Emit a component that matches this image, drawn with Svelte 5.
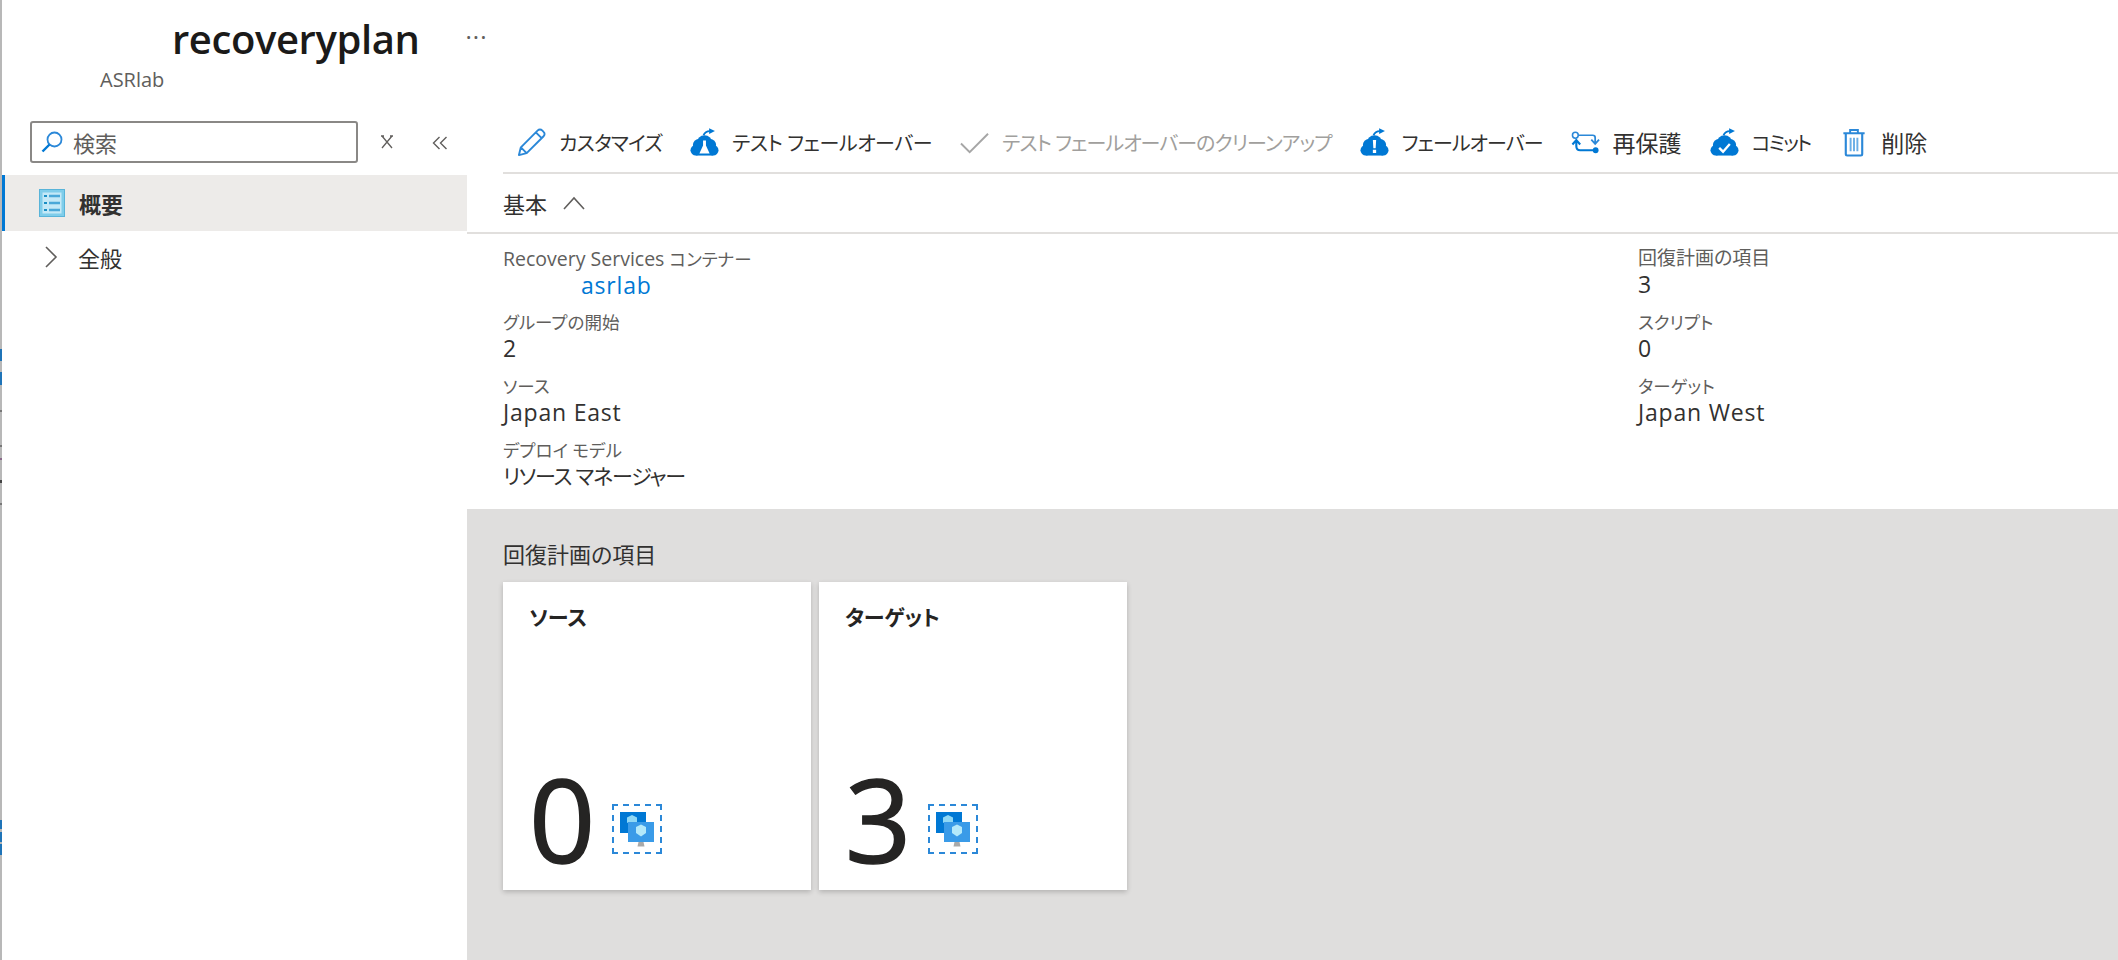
<script lang="ts">
  // Recovery plan overview blade
  type Tool = { icon: string; label: string; off?: boolean; kind?: string };
  const tools: Tool[] = [
    { icon: "pencil", label: "カスタマイズ" },
    { icon: "flask", label: "テスト フェールオーバー", kind: "loose" },
    { icon: "check", label: "テスト フェールオーバーのクリーンアップ", off: true, kind: "narrow" },
    { icon: "alert", label: "フェールオーバー", kind: "narrow" },
    { icon: "swap", label: "再保護", kind: "kanji" },
    { icon: "commit", label: "コミット", kind: "tight" },
    { icon: "trash", label: "削除", kind: "kanji last" },
  ];
  type Field = { latin?: string; label: string; value: string; kind?: string; wide?: boolean };
  const leftFields: Field[] = [
    { latin: "Recovery Services ", label: "コンテナー", value: "asrlab", kind: "link" },
    { label: "グループの開始", value: "2" },
    { label: "ソース", value: "Japan East" },
    { label: "デプロイ モデル", value: "リソース マネージャー", kind: "kana" },
  ];
  const rightFields: Field[] = [
    { label: "回復計画の項目", value: "3", wide: true },
    { label: "スクリプト", value: "0" },
    { label: "ターゲット", value: "Japan West" },
  ];
  const cards = [
    { title: "ソース", count: 0 },
    { title: "ターゲット", count: 3 },
  ];
  // Marks on the window edge at the far left of the capture
  const edgeMarks = [
    { top: 349, h: 12, c: "#1f74b8" },
    { top: 372, h: 13, c: "#1f74b8" },
    { top: 410, h: 2, c: "#777" },
    { top: 445, h: 2, c: "#777" },
    { top: 458, h: 2, c: "#8a6a8a" },
    { top: 480, h: 3, c: "#444" },
    { top: 503, h: 2, c: "#777" },
    { top: 820, h: 9, c: "#1f74b8" },
    { top: 832, h: 10, c: "#1f74b8" },
    { top: 844, h: 11, c: "#1f74b8" },
  ];
</script>

{#snippet fieldList(list: Field[])}
  {#each list as f}
    <div class="field">
      <div class="label" class:wide={f.wide}>{#if f.latin}<span class="latin">{f.latin}</span>{/if}{f.label}</div>
      <div class="value {f.kind ?? ''}">{f.value}</div>
    </div>
  {/each}
{/snippet}

{#snippet cloud(mark: string)}
  <svg class="ticon" viewBox="0 0 30 30" aria-hidden="true">
    <g fill="#0078d4">
      <circle cx="6" cy="23" r="5.500" />
      <circle cx="24" cy="23" r="5.500" />
      <circle cx="9" cy="17.500" r="6" />
      <circle cx="21" cy="17.500" r="6" />
      <circle cx="15" cy="15.500" r="8" />
      <rect x="6" y="20" width="18" height="8.500" />
    </g>
    <path d="M14 7.500c1.200-3 3.500-4.300 6.500-4.300" fill="none" stroke="#0078d4" stroke-width="2" />
    <path d="M19.800 0.200l6 3-6 3z" fill="#0078d4" />
    {#if mark === "flask"}
      <path d="M13.500 13h3v5l3.800 8.500H9.700l3.800-8.500z" fill="#fff" />
    {:else if mark === "alert"}
      <path d="M13.300 12.500h3.400l-.5 8.500h-2.400z M13.300 22.400h3.400v3.400h-3.400z" fill="#fff" />
    {:else}
      <path d="M9.500 20.500l4 4 7-8" fill="none" stroke="#fff" stroke-width="2.400" />
    {/if}
  </svg>
{/snippet}

{#snippet toolIcon(name: string)}
  {#if name === "pencil"}
    <svg class="ticon" viewBox="0 0 30 30" aria-hidden="true">
      <path d="M2 28l2-8L21.500 2.500a3 3 0 0 1 4.500 0l1.500 1.500a3 3 0 0 1 0 4.500L10 26z M4 20l6 6 M19.500 4.500l6 6" fill="none" stroke="#2b88d8" stroke-width="2" stroke-linejoin="round" />
    </svg>
  {:else if name === "check"}
    <svg class="ticon" viewBox="0 0 30 30" aria-hidden="true">
      <path d="M1 16l9 9L29 6" fill="none" stroke="#a6a6a6" stroke-width="2" />
    </svg>
  {:else if name === "swap"}
    <svg class="ticon" viewBox="0 0 30 30" aria-hidden="true">
      <circle cx="4.500" cy="7.500" r="3" fill="none" stroke="#2b88d8" stroke-width="1.600" />
      <path d="M7.500 7.500h15Q25 7.500 25 10v5 M21 12l4 4.500 4-4.500" fill="none" stroke="#2b88d8" stroke-width="1.800" />
      <path d="M5.500 14v4.500q0 4.500 4 4.500H25 M1.500 17l4-4.500 4 4.500" fill="none" stroke="#0078d4" stroke-width="2.200" />
      <circle cx="25.500" cy="23" r="3" fill="#0078d4" />
    </svg>
  {:else if name === "trash"}
    <svg class="ticon trash" viewBox="0 0 24 30" aria-hidden="true">
      <path d="M1 5.500h22 M8 5V2h8v3" fill="none" stroke="#2b88d8" stroke-width="2" />
      <path d="M3.500 6v21a1.500 1.500 0 0 0 1.500 1.500h14a1.500 1.500 0 0 0 1.500-1.500V6" fill="none" stroke="#2b88d8" stroke-width="2.200" />
      <path d="M8.500 10v14 M12 10v14 M15.500 10v14" stroke="#6aaee6" stroke-width="2" />
    </svg>
  {:else if name === "flask"}
    {@render cloud("flask")}
  {:else if name === "alert"}
    {@render cloud("alert")}
  {:else}
    {@render cloud("check")}
  {/if}
{/snippet}

{#snippet vmIcon()}
  <span class="vmbox">
    <svg viewBox="0 0 34 35" width="34" height="35" aria-hidden="true">
      <rect x="0" y="0" width="26" height="21" fill="#0078d4" />
      <path d="M12 3l5 2.500v5L12 13l-5-2.500v-5z" fill="#8fd8f5" />
      <rect x="8" y="10" width="26" height="20" fill="#3a9be8" />
      <path d="M21 12.500l5 2.500v6l-5 3.500-5-3.500v-6z" fill="#b4e9fa" />
      <path d="M18.500 30h5l1 4.500h-7z" fill="#a9a9a9" />
    </svg>
  </span>
{/snippet}

<div class="page">
  <div class="edge">
    {#each edgeMarks as m}
      <i style="top:{m.top}px;height:{m.h}px;background:{m.c}"></i>
    {/each}
  </div>

  <header>
    <div class="title-row">
      <h1>recoveryplan</h1>
      <span class="more">···</span>
    </div>
    <div class="sub">ASRlab</div>
  </header>

  <div class="body">
    <nav>
      <div class="search-row">
        <div class="search">
          <svg viewBox="0 0 22 22" width="22" height="22" aria-hidden="true">
            <circle cx="13.500" cy="8.500" r="7" fill="none" stroke="#2b88d8" stroke-width="1.800" />
            <path d="M8.500 13.500L1.500 20.500" stroke="#0078d4" stroke-width="2.400" />
          </svg>
          <span>検索</span>
        </div>
        <svg class="clear" viewBox="0 0 14 14" width="14" height="14" aria-hidden="true">
          <path d="M2 1L12 13 M12 1L2 13 M4 1h-3 M10 1h3" fill="none" stroke="#605e5c" stroke-width="1.300" />
        </svg>
        <svg class="collapse" viewBox="0 0 16 14" width="16" height="14" aria-hidden="true">
          <path d="M7.500 1L1.500 7l6 6 M14.500 1l-6 6 6 6" fill="none" stroke="#605e5c" stroke-width="1.400" />
        </svg>
      </div>
      <div class="nav-item active">
        <svg viewBox="0 0 26 28" width="26" height="28" aria-hidden="true">
          <rect x="0.500" y="0.500" width="25" height="27" fill="#7fcdea" stroke="#59b4d9" />
          <rect x="3.500" y="3.500" width="19" height="21" fill="#c4e9f7" />
          <path d="M5 7h3 M5 14h3 M5 21h3" stroke="#1a8fc4" stroke-width="2" />
          <path d="M10 7h11 M10 14h11 M10 21h11" stroke="#4aa8d8" stroke-width="2.500" />
        </svg>
        <span>概要</span>
      </div>
      <div class="nav-item">
        <svg class="chev" viewBox="0 0 14 22" width="14" height="22" aria-hidden="true">
          <path d="M2 1l10 10L2 21" fill="none" stroke="#605e5c" stroke-width="1.600" />
        </svg>
        <span>全般</span>
      </div>
    </nav>

    <main>
      <div class="toolbar">
        {#each tools as t}
          <div class="tool {t.kind ?? ''}" class:off={t.off}>
            {@render toolIcon(t.icon)}
            <span>{t.label}</span>
          </div>
        {/each}
      </div>

      <div class="essentials-head">
        <span>基本</span>
        <svg viewBox="0 0 22 14" width="22" height="14" aria-hidden="true">
          <path d="M1 13L11 2l10 11" fill="none" stroke="#605e5c" stroke-width="1.600" />
        </svg>
      </div>

      <div class="essentials">
        <div class="col">{@render fieldList(leftFields)}</div>
        <div class="col">{@render fieldList(rightFields)}</div>
      </div>

      <section class="items">
        <h2>回復計画の項目</h2>
        <div class="cards">
          {#each cards as c}
            <div class="card">
              <div class="card-title">{c.title}</div>
              <div class="count">
                <span class="num">{c.count}</span>
                {@render vmIcon()}
              </div>
            </div>
          {/each}
        </div>
      </section>
    </main>
  </div>
</div>

<style>
  :global(body) {
    margin: 0;
    background: #fff;
    overflow: hidden;
  }
  .page {
    position: relative;
    width: 2118px;
    height: 960px;
    display: flex;
    flex-direction: column;
    box-sizing: border-box;
    padding-left: 2px;
    overflow: hidden;
    font-family: "Open Sans", "Noto Sans CJK JP", sans-serif;
    font-feature-settings: "palt";
    color: #323130;
  }
  .edge {
    position: absolute;
    left: 0;
    top: 0;
    bottom: 0;
    width: 2px;
    background: #b8b8b8;
  }
  .edge i {
    position: absolute;
    left: 0;
    width: 2px;
  }
  header {
    height: 121px;
    flex: none;
    box-sizing: border-box;
    padding: 14px 0 0 170px;
  }
  .title-row {
    display: flex;
    align-items: center;
    gap: 46px;
    height: 50px;
  }
  h1 {
    margin: 0;
    font-size: 40px;
    line-height: 50px;
    font-weight: 600;
    color: #1b1a19;
    letter-spacing: -0.4px;
  }
  .more {
    font-size: 24px;
    color: #605e5c;
    letter-spacing: 1px;
    margin-bottom: 6px;
  }
  .sub {
    margin: 4px 0 0 -72px;
    font-size: 20px;
    line-height: 24px;
    color: #605e5c;
  }
  .body {
    flex: 1;
    display: flex;
    min-height: 0;
  }
  nav {
    width: 465px;
    flex: none;
  }
  .search-row {
    display: flex;
    align-items: center;
    height: 54px;
    padding: 0 0 0 28px;
  }
  .search {
    width: 328px;
    height: 42px;
    box-sizing: border-box;
    border: 2px solid #8a8886;
    border-radius: 3px;
    display: flex;
    align-items: center;
    gap: 10px;
    padding-left: 9px;
    font-size: 22px;
    color: #605e5c;
    align-self: flex-start;
  }
  .clear {
    margin: -12px 0 0 22px;
  }
  .collapse {
    margin: -10px 0 0 38px;
  }
  .nav-item {
    height: 56px;
    display: flex;
    align-items: center;
    font-size: 22px;
    color: #323130;
    box-sizing: border-box;
  }
  .nav-item.active {
    background: #edebe9;
    border-left: 3px solid #0078d4;
    padding-left: 34px;
    font-weight: 700;
  }
  .nav-item.active span {
    margin-left: 14px;
  }
  .nav-item:not(.active) {
    padding-left: 42px;
    height: 52px;
  }
  .nav-item:not(.active) span {
    margin-left: 20px;
  }
  main {
    flex: 1;
    display: flex;
    flex-direction: column;
    min-width: 0;
  }
  .toolbar {
    height: 53px;
    flex: none;
    box-sizing: border-box;
    margin-left: 36px;
    border-bottom: 2px solid #e1dfdd;
    display: flex;
    align-items: flex-start;
    padding: 6px 0 0 14px;
    gap: 28px;
  }
  .tool {
    display: flex;
    align-items: center;
    gap: 13px;
    height: 30px;
    font-size: 20px;
    letter-spacing: -0.7px;
    white-space: nowrap;
  }
  .tool.loose {
    letter-spacing: -0.4px;
  }
  .tool.narrow {
    letter-spacing: -0.9px;
  }
  .tool.kanji {
    font-size: 23px;
    letter-spacing: 0;
  }
  .tool.tight {
    letter-spacing: -2px;
  }
  .tool.last {
    margin-left: 4px;
    gap: 15px;
  }
  .tool.off {
    color: #a19f9d;
  }
  .ticon {
    width: 29px;
    height: 29px;
    flex: none;
  }
  .ticon.trash {
    width: 24px;
  }
  .essentials-head {
    height: 60px;
    flex: none;
    box-sizing: border-box;
    border-bottom: 2px solid #e1dfdd;
    padding-left: 36px;
    display: flex;
    align-items: center;
    gap: 16px;
    font-size: 22px;
  }
  .essentials {
    height: 275px;
    flex: none;
    box-sizing: border-box;
    display: flex;
    padding: 11px 0 0 36px;
  }
  .col:first-child {
    width: 1135px;
    flex: none;
  }
  .col {
    flex: 1;
    min-width: 0;
  }
  .field {
    height: 64px;
  }
  .label {
    font-size: 17.5px;
    line-height: 27px;
    color: #605e5c;
  }
  .label.wide {
    font-size: 19px;
  }
  .latin {
    font-size: 19.500px;
  }
  .value {
    font-size: 23px;
    letter-spacing: 0.8px;
    line-height: 26px;
    margin-top: -1px;
    color: #323130;
  }
  .value.kana {
    font-size: 21px;
    letter-spacing: -1.2px;
  }
  .value.link {
    color: #0078d4;
    padding-left: 78px;
  }
  .items {
    flex: 1;
    background: #dfdedd;
    padding: 29px 0 0 36px;
  }
  h2 {
    margin: 0;
    font-size: 22px;
    font-weight: 400;
    line-height: 32px;
    color: #323130;
  }
  .cards {
    display: flex;
    gap: 8px;
    margin-top: 12px;
  }
  .card {
    width: 308px;
    height: 308px;
    box-sizing: border-box;
    background: #fff;
    box-shadow: 0 2px 5px rgba(0, 0, 0, 0.2);
    padding: 20px 0 0 26px;
    display: flex;
    flex-direction: column;
    justify-content: space-between;
  }
  .card-title {
    font-size: 21px;
    font-weight: 700;
    line-height: 30px;
    color: #252423;
  }
  .count {
    display: flex;
    align-items: flex-end;
    gap: 17px;
    margin-bottom: 36px;
  }
  .num {
    font-size: 116px;
    line-height: 88px;
    font-weight: 400;
    -webkit-text-stroke: 1.5px #252423;
    color: #252423;
    margin-bottom: -8px;
  }
  .vmbox {
    width: 50px;
    height: 50px;
    box-sizing: border-box;
    border: 2px dashed #2b88d8;
    display: flex;
    align-items: center;
    justify-content: center;
  }
</style>
